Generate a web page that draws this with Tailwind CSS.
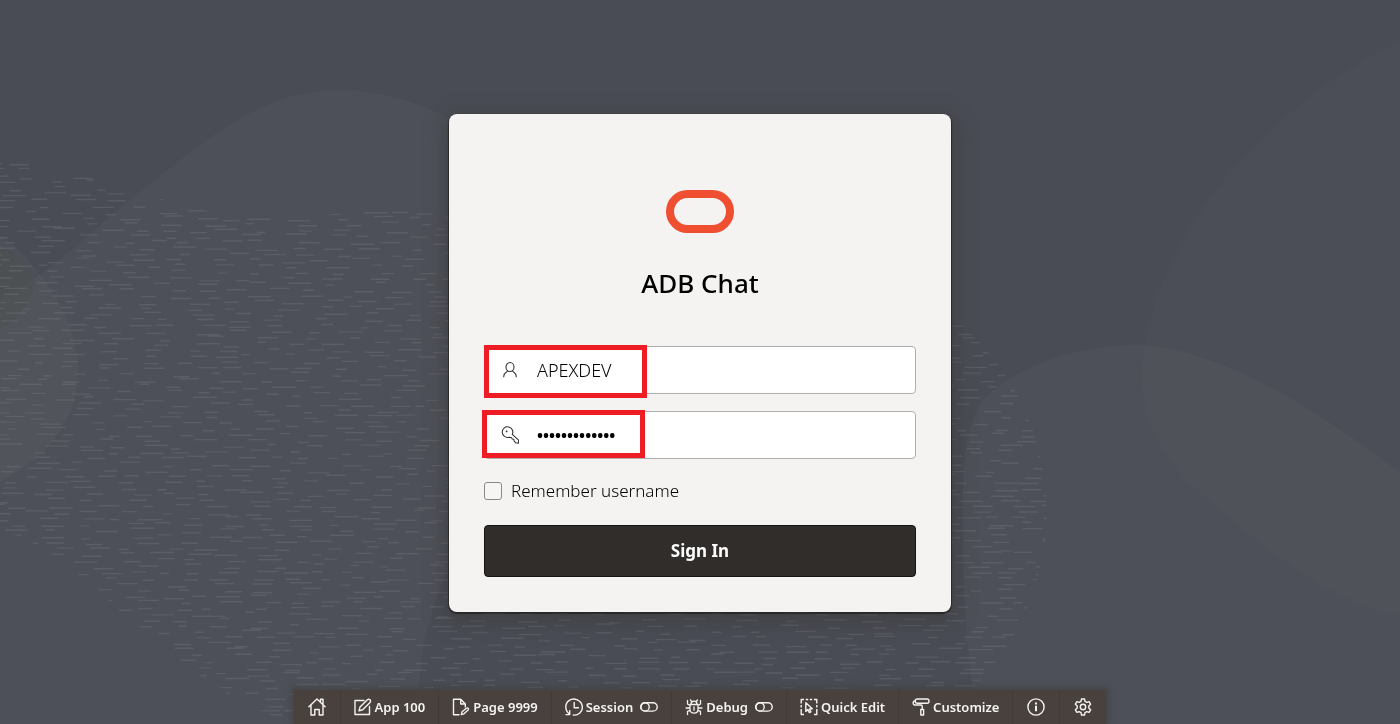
<!DOCTYPE html>
<html lang="en">
<head>
    <meta charset="UTF-8">
    <meta name="viewport" content="width=device-width, initial-scale=1.0">
    <title>ADB Chat - Sign In</title>
    <script src="https://cdn.jsdelivr.net/npm/@tailwindcss/browser@4"></script>
</head>
<body class="bg-[#494c54] font-['Noto_Sans',sans-serif] text-black">

    <!-- Background shapes -->
    <svg class="fixed inset-0 -z-10 h-full w-full" viewBox="0 0 1400 724" preserveAspectRatio="xMidYMid slice" aria-hidden="true">
        <defs>
            <clipPath id="texture-area">
                <path d="M0 161 C60 166 120 182 175 204 C230 220 320 220 450 202 C650 180 850 230 950 315 C1000 355 1045 420 1047 510 C1047 580 1020 640 970 692 L940 724 H300 C220 705 180 655 130 620 C80 575 50 545 0 530 Z"/>
            </clipPath>
        </defs>
        <path d="M0 300 C60 268 110 212 160 176 C220 128 270 90 340 90 C400 90 480 120 540 190 C620 300 500 440 452 560 C430 610 418 650 418 724 H0 Z" fill="#4d5058"/>
        <path d="M978 724 C968 660 963 610 963 540 C962 470 962 430 985 397 C1025 362 1080 345 1140 345 C1230 350 1330 420 1400 472 V724 Z" fill="#4d5058"/>
        <path d="M1400 42 C1330 72 1250 140 1205 205 C1170 260 1146 305 1142 370 C1140 430 1170 470 1215 505 C1275 560 1340 605 1400 616 Z" fill="#fff" fill-opacity="0.01"/>
        <path d="M0 234 C45 268 78 325 78 370 C78 420 50 455 0 482 Z" fill="#fff" fill-opacity="0.025"/>
        <path d="M0 248 C20 252 35 275 33 290 C30 305 15 322 0 328 Z" fill="#4d5150" fill-opacity="0.6"/>
        <g id="texture" clip-path="url(#texture-area)" stroke="#868890" stroke-opacity="0.26" stroke-width="1.4" stroke-linecap="round"></g>
    </svg>

    <!-- Login -->
    <main class="flex min-h-screen items-center justify-center pt-0.5">
        <form id="login-form" class="w-full max-w-[502px] rounded-lg bg-[#f4f3f2] px-[35px] pt-[76px] pb-[35px] shadow-[0_1px_1px_1px_#00000066,0_6px_20px_4px_#3a383688]">
            <svg class="mx-auto block h-[43px] w-[68px]" viewBox="0 0 68 43" fill="none" aria-hidden="true">
                <rect x="4" y="4" width="60" height="35" rx="17.5" stroke="#f04e30" stroke-width="8"/>
            </svg>
            <h1 class="mt-8 text-center text-[26px] leading-9 font-medium">ADB Chat</h1>

            <div class="relative mt-[45px]">
                <label for="username" class="absolute inset-y-0 left-[17px] flex items-center" aria-label="Username">
                    <svg class="h-[18px] w-[18px]" viewBox="0 0 18 18" fill="none" stroke="#333" stroke-width="1.1" stroke-linecap="round">
                        <ellipse cx="9" cy="6" rx="4" ry="4.5"/>
                        <path d="M6.6 9.8C6.5 11.3 2.8 11 2.7 15.8M11.4 9.8c.1 1.5 3.8 1.2 3.9 6"/>
                    </svg>
                </label>
                <input id="username" type="text" value="APEXDEV" autocomplete="off" spellcheck="false"
                    class="block h-12 w-full rounded-sm border border-[#b0afae] bg-white pr-3 pl-[52px] text-lg leading-6 font-[350] outline-none">
                <div class="pointer-events-none absolute -top-px left-0 h-[53px] w-[163px] border-5 border-[#ee1c25]"></div>
            </div>

            <div class="relative mt-[17px]">
                <label for="password" class="absolute inset-y-0 left-[17px] flex items-center" aria-label="Password">
                    <svg class="h-[18px] w-[18px]" viewBox="0 0 18 18" fill="none" stroke="#333" stroke-width="1.1" stroke-linejoin="round">
                        <path d="M11.3 8.4A5.3 5.3 0 1 0 8 11.2l2.3.3 1 1.5 1.4.3.5 1.7 1.3 1.7 2.9.5.2-3Z"/>
                        <circle cx="5.6" cy="5.4" r=".9" fill="#333" stroke="none"/>
                    </svg>
                </label>
                <input id="password" type="password" value="apexdev#12345" autocomplete="off"
                    class="block h-12 w-full rounded-sm border border-[#b0afae] bg-white pr-3 pl-[52px] text-base leading-6 font-bold outline-none">
                <div class="pointer-events-none absolute -top-px -left-0.5 h-12 w-[163px] border-5 border-[#ee1c25]"></div>
            </div>

            <div class="mt-5 flex h-6 items-center gap-[9px]">
                <input id="remember" type="checkbox" class="h-[18px] w-[18px] appearance-none rounded-[3px] border border-[#8b8987] bg-[#f6f5f4] checked:bg-[#312d2a]">
                <label for="remember" class="text-[17px] leading-6 font-[350]">Remember username</label>
            </div>

            <button type="submit" class="mt-[22px] h-[52px] w-full rounded-sm border border-[#161513] bg-[#312d2a] text-[17px] leading-6 font-bold text-white">Sign In</button>
        </form>
    </main>

    <!-- Developer toolbar -->
    <nav class="pointer-events-none fixed inset-x-0 bottom-0 flex justify-center" aria-label="Developer toolbar">
        <div class="pointer-events-auto flex h-[34px] divide-x divide-[#403b38] bg-[#48413e] text-[13px] leading-5 font-semibold text-[#f5f3f1] shadow-[0_0_6px_2px_#3b393799]">
            <a href="#" class="flex items-center px-3.5" aria-label="Home">
                <svg class="h-[18px] w-[18px]" viewBox="0 0 18 18" fill="none" stroke="currentColor" stroke-width="1.4" stroke-linejoin="round" stroke-linecap="round">
                    <path d="M.9 8.7 9 1l8.1 7.7M3 7v10h3.8v-5.5h4.4V17H15V7M12.5 4V1.3H15v5"/>
                </svg>
            </a>
            <a href="#" class="flex items-center gap-[3px] px-[13px]">
                <svg class="h-[18px] w-[18px]" viewBox="0 0 18 18" fill="none" stroke="currentColor" stroke-width="1.4" stroke-linejoin="round" stroke-linecap="round">
                    <path d="M10 2.5H1v14h14.5V8.5M5 12.7l1-3.6 7.4-7.3a1.8 1.8 0 0 1 2.6 2.6L8.7 11.7Z"/>
                </svg>
                App 100
            </a>
            <a href="#" class="flex items-center gap-[3px] px-[13px]">
                <svg class="h-[18px] w-[18px]" viewBox="0 0 18 18" fill="none" stroke="currentColor" stroke-width="1.4" stroke-linejoin="round" stroke-linecap="round">
                    <path d="M7 16.8H1.5V1.2h7.2L13.3 6v3M8.7 1.2V6h4.6M9.3 16.6l.8-2.8 4.3-3.5a1.2 1.2 0 0 1 1.7 1.8L12 15.8Z"/>
                </svg>
                Page 9999
            </a>
            <button type="button" class="flex items-center gap-[3px] px-[13px]">
                <svg class="h-[18px] w-[18px]" viewBox="0 0 18 18" fill="none" stroke="currentColor" stroke-width="1.4" stroke-linejoin="round" stroke-linecap="round">
                    <path d="M4.2 15.8C-.3 12.6-.3 5.5 4 2.6c5-3.6 12.6-.5 13.3 5.8.6 5.5-4.2 9.3-9 8.6M1 16.6h3.7v-3.8M9.2 4.5v5.3h4.3"/>
                </svg>
                Session
                <svg class="ml-1 h-[18px] w-[18px]" viewBox="0 0 18 18" fill="none" stroke="currentColor" stroke-width="1.4">
                    <rect x=".8" y="4.7" width="16.4" height="8.4" rx="4.2"/>
                    <rect x=".8" y="4.7" width="8.4" height="8.4" rx="4.2"/>
                </svg>
            </button>
            <button type="button" class="flex items-center gap-[3px] px-[13px]">
                <svg class="h-[18px] w-[18px]" viewBox="0 0 18 18" fill="none" stroke="currentColor" stroke-width="1.3" stroke-linejoin="round" stroke-linecap="round">
                    <path d="M5 6.5h8v4.7c0 5.3-8 5.3-8 0ZM6 6.2c0-4 6-4 6 0M9 9v3.3M5 10H1M17 10h-4M5 7.5 2.5 6V2.5M13 7.5 15.5 6V2.5M5.2 12.4l-2.7 1v3.1M12.8 12.4l2.7 1v3.1M5.5 2l1.6 2M12.5 2l-1.6 2"/>
                </svg>
                Debug
                <svg class="ml-1 h-[18px] w-[18px]" viewBox="0 0 18 18" fill="none" stroke="currentColor" stroke-width="1.4">
                    <rect x=".8" y="4.7" width="16.4" height="8.4" rx="4.2"/>
                    <rect x=".8" y="4.7" width="8.4" height="8.4" rx="4.2"/>
                </svg>
            </button>
            <button type="button" class="flex items-center gap-[3px] px-[13px]">
                <svg class="h-[18px] w-[18px]" viewBox="0 0 18 18" fill="none" stroke="currentColor" stroke-width="1.4" stroke-linejoin="round">
                    <path d="M4 1.5H1.2v4M1.2 7v2.5M1.2 11v5.5H4M14 1.5h2.8v4M16.8 7v2.5M16.8 11v5.5H14M5.8 1.5h2.4M9.8 1.5h2.4"/>
                    <path d="M5.8 4.8v8.6l2.1-1.8 1.5 3 1.5-.7-1.4-2.9 2.8-.3Z"/>
                </svg>
                Quick Edit
            </button>
            <button type="button" class="flex items-center gap-[3px] px-[13px]">
                <svg class="h-[18px] w-[18px]" viewBox="0 0 18 18" fill="none" stroke="currentColor" stroke-width="1.4" stroke-linejoin="round" stroke-linecap="round">
                    <rect x="3.2" y="1" width="13.8" height="4.2" rx="2"/>
                    <path d="M3.2 3H2.5C.7 3 .7 7 2.5 7H9c.8 0 1.2.5 1.2 1.2v3.3M8.8 11.5h2.8V17H8.8Z"/>
                </svg>
                Customize
            </button>
            <button type="button" class="flex items-center px-3.5" aria-label="Info">
                <svg class="h-[18px] w-[18px]" viewBox="0 0 18 18" fill="none" stroke="currentColor" stroke-width="1.4">
                    <circle cx="9" cy="9" r="8.1"/>
                    <path d="M9 7.8v5.4M9 4.5v2" stroke-width="2"/>
                </svg>
            </button>
            <button type="button" class="flex items-center px-3.5" aria-label="Settings">
                <svg class="h-[18px] w-[18px]" viewBox="0 0 18 18" fill="none" stroke="currentColor" stroke-width="1.4" stroke-linejoin="round">
                    <path d="M7.5 1h3l.5 2.4 1.8 1 2.3-.8 1.5 2.6L14.8 8v2l1.8 1.8-1.5 2.6-2.3-.8-1.8 1-.5 2.4h-3L7 14.6l-1.8-1-2.3.8-1.5-2.6L3.2 10V8L1.4 6.2l1.5-2.6 2.3.8 1.8-1Z"/>
                    <circle cx="9" cy="9" r="2.7"/>
                </svg>
            </button>
        </div>
    </nav>

    <script>
        // Fill the textured area with short level dashes
        const texture = document.getElementById("texture");
        let seed = 7;
        const random = () => {
            seed = (seed * 16807) % 2147483647;
            return seed / 2147483647;
        };

        let d = "";
        for (let y = 162; y < 724; y += 6) {
            for (let x = -20 + random() * 30; x < 1050; x += 24 + random() * 30) {
                const length = 7 + random() * 16;
                const top = y + random() * 5;
                d += `M${x.toFixed(1)} ${top.toFixed(1)}h${length.toFixed(1)}`;
            }
        }
        const path = document.createElementNS("http://www.w3.org/2000/svg", "path");
        path.setAttribute("d", d);
        texture.appendChild(path);

        document.getElementById("login-form").addEventListener("submit", (e) => e.preventDefault());
    </script>

</body>
</html>
